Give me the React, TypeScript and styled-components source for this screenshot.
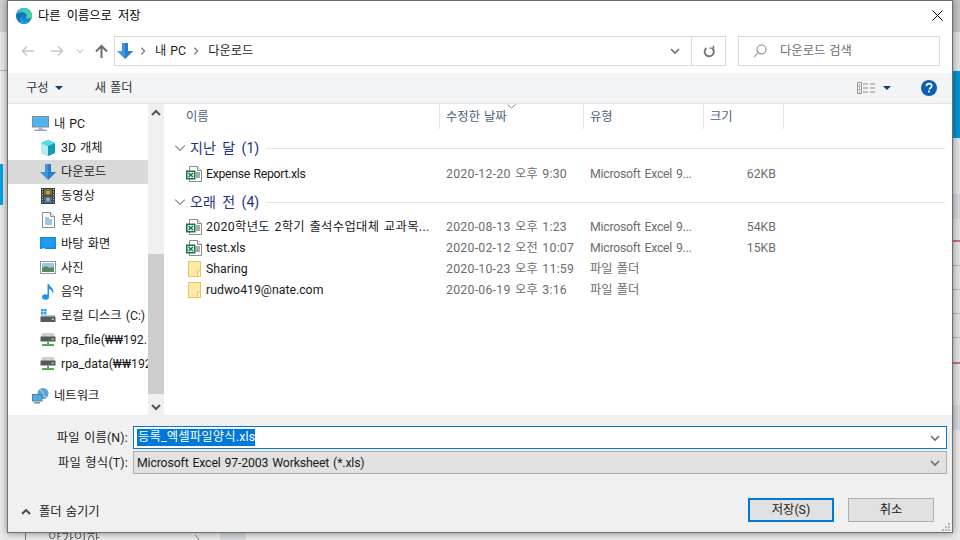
import React from "react";
import { createGlobalStyle, styled } from "styled-components";

const GlobalStyle = createGlobalStyle`
  * {
    box-sizing: border-box;
  }

  html, body {
    margin: 0;
    padding: 0;
    width: 960px;
    height: 540px;
    overflow: hidden;
  }

  body {
    font-family: Roboto, "Noto Sans CJK KR", sans-serif;
    font-size: 12.3px;
    line-height: 16px;
    word-spacing: 1px;
    color: #1a1a1a;
  }
`;

const Desktop = styled.div`
  position: relative;
  width: 960px;
  height: 540px;
  overflow: hidden;
  background: #e9e9e9;
`;

/* the blurred page behind the dialog */
const BackLeft = styled.div`
  position: absolute;
  left: 0;
  top: 0;
  width: 7px;
  height: 532px;
  display: flex;
  flex-direction: column;
`;

const BackRight = styled.div`
  position: absolute;
  right: 0;
  top: 0;
  width: 8px;
  height: 540px;
  display: flex;
  flex-direction: column;
`;

const Stripe = styled.div<{ $h: number; $c: string; $w?: number }>`
  height: ${(p) => p.$h}px;
  width: ${(p) => (p.$w ? `${p.$w}px` : "100%")};
  background: ${(p) => p.$c};
  flex: none;
`;

const BackBottom = styled.div`
  position: absolute;
  left: 25px;
  top: 531px;
  height: 9px;
  width: 222px;
  display: flex;
  align-items: flex-start;
  font-size: 14px;
  line-height: 14px;
  color: #6a6a6a;
  filter: blur(0.3px);
`;

const BackTick = styled.div`
  width: 1px;
  height: 9px;
  margin-right: 22px;
  background: #777;
`;

const BackLabel = styled.span`
  width: 146px;
  flex: none;
`;

const BackChevron = styled.svg`
  margin-top: 3px;
  margin-right: 20px;
  flex: none;
`;

const BackShade = styled.div`
  width: 26px;
  height: 9px;
  flex: none;
  background: #d3d6da;
`;

const Dialog = styled.div`
  position: absolute;
  left: 7px;
  top: 0;
  width: 946px;
  height: 533px;
  background: #ffffff;
  border: 1px solid #6e6e6e;
  box-shadow: 0 0 7px rgba(0, 0, 0, 0.45);
  display: flex;
  flex-direction: column;
`;

const TitleBar = styled.div`
  height: 29px;
  flex: none;
  display: flex;
  align-items: center;
  padding: 0 9px 0 8px;
  gap: 6px;
`;

const TitleText = styled.div`
  flex: 1;
  word-spacing: 3px;
  color: #000;
`;

const NavBar = styled.div`
  height: 43px;
  flex: none;
  display: flex;
  align-items: flex-start;
  padding: 6px 12px 0 13px;
`;

const NavButton = styled.div<{ $w: number; $ml: number }>`
  width: ${(p) => p.$w}px;
  margin-left: ${(p) => p.$ml}px;
  height: 30px;
  flex: none;
  display: flex;
  align-items: center;
  justify-content: center;
`;

const AddressBox = styled.div`
  width: 612px;
  height: 30px;
  flex: none;
  margin-left: 6px;
  border: 1px solid #d9d9d9;
  display: flex;
  align-items: center;
  padding-left: 2px;
`;

const CrumbSep = styled.span`
  display: flex;
  margin-left: 6px;
`;

const Crumb = styled.span`
  margin-left: 8px;
  color: #1a1a1a;
`;

const AddressFill = styled.div`
  flex: 1;
`;

const AddressDrop = styled.div`
  width: 33px;
  height: 100%;
  display: flex;
  align-items: center;
  justify-content: center;
`;

const RefreshBox = styled.div`
  width: 34px;
  height: 100%;
  flex: none;
  border-left: 1px solid #d9d9d9;
  display: flex;
  align-items: center;
  justify-content: center;
`;

const SearchBox = styled.div`
  width: 202px;
  height: 30px;
  margin-left: 12px;
  flex: none;
  border: 1px solid #d9d9d9;
  display: flex;
  align-items: center;
  padding-left: 14px;
  gap: 13px;
  color: #6d6d6d;
`;

const CommandBar = styled.div`
  height: 31px;
  flex: none;
  background: #f3f4f6;
  border-bottom: 1px solid #e6e6e6;
  display: flex;
  align-items: center;
  padding: 0 15px 0 18px;
  color: #353535;
`;

const CommandItem = styled.div`
  display: flex;
  align-items: center;
  gap: 6px;
  margin-right: 32px;
`;

const CommandFill = styled.div`
  flex: 1;
`;

const Caret = styled.div<{ $c: string }>`
  width: 0;
  height: 0;
  border-left: 4px solid transparent;
  border-right: 4px solid transparent;
  border-top: 4px solid ${(p) => p.$c};
`;

const ViewSwitch = styled.div`
  display: flex;
  align-items: center;
  gap: 8px;
  margin-right: 30px;
`;

const Body = styled.div`
  flex: 1;
  min-height: 0;
  display: flex;
`;

const NavPane = styled.div`
  width: 140px;
  flex: none;
  overflow: hidden;
  padding-top: 8px;
`;

const NavRow = styled.div<{ $child?: boolean; $selected?: boolean; $gap?: boolean }>`
  height: 24px;
  width: 140px;
  display: flex;
  align-items: center;
  gap: 5px;
  padding-left: ${(p) => (p.$child ? 32 : 24)}px;
  padding-bottom: 1px;
  margin-top: ${(p) => (p.$gap ? 8 : 0)}px;
  background: ${(p) => (p.$selected ? "#d9d9d9" : "transparent")};
  white-space: nowrap;
  color: #1a1a1a;
  overflow: hidden;

  & > svg {
    flex: none;
  }
`;

const ScrollBar = styled.div`
  width: 16px;
  flex: none;
  background: #f0f0f0;
  display: flex;
  flex-direction: column;
`;

const ScrollButton = styled.div`
  height: 17px;
  flex: none;
  display: flex;
  align-items: center;
  justify-content: center;
`;

const ScrollTrack = styled.div`
  flex: 1;
  padding-top: 133px;
  padding-bottom: 4px;
  display: flex;
`;

const ScrollThumb = styled.div`
  flex: 1;
  background: #cdcdcd;
`;

const FilePane = styled.div`
  flex: 1;
  min-width: 0;
  padding-left: 1px;
`;

const columns = "275px 144px 120px 80px 1fr";

const HeaderRow = styled.div`
  position: relative;
  display: grid;
  grid-template-columns: ${columns};
  height: 25px;
  color: #4c607a;
`;

const HeaderCell = styled.div<{ $first?: boolean; $last?: boolean }>`
  display: flex;
  align-items: center;
  padding-left: ${(p) => (p.$first ? 21 : 6)}px;
  border-right: ${(p) => (p.$last ? "none" : "1px solid #e5e5e5")};
`;

const SortMark = styled.svg`
  position: absolute;
  left: 342px;
  top: 0;
`;

const GroupHeader = styled.div<{ $before: number; $after: number }>`
  display: flex;
  align-items: center;
  height: 18px;
  margin-top: ${(p) => p.$before}px;
  margin-bottom: ${(p) => p.$after}px;
  padding: 0 7px 0 9px;
  color: #1e3287;
  font-size: 14px;
  word-spacing: 3px;
  gap: 4px;
  white-space: nowrap;
`;

const GroupLine = styled.div`
  flex: 1;
  height: 1px;
  margin-left: 3px;
  background: #e3e3e3;
`;

const FileRow = styled.div`
  display: grid;
  grid-template-columns: ${columns};
  height: 21px;
  align-items: center;
  color: #6d6d6d;
  white-space: nowrap;
`;

const NameCell = styled.div<{ $track: number }>`
  display: flex;
  align-items: center;
  gap: 4px;
  padding-left: 21px;
  color: #1a1a1a;
  letter-spacing: ${(p) => p.$track}px;
  overflow: hidden;

  & > svg {
    flex: none;
  }
`;

const DataCell = styled.div<{ $track?: number }>`
  padding-left: 6px;
  letter-spacing: ${(p) => p.$track ?? 0}px;
`;

const SizeCell = styled.div`
  padding-right: 8px;
  text-align: right;
`;

const Footer = styled.div`
  position: relative;
  height: 117px;
  flex: none;
  background: #f0f0f0;
  padding: 11px 5px 0 0;
  display: flex;
  flex-direction: column;
`;

const FieldRow = styled.div`
  display: flex;
  align-items: center;
  height: 23px;
  margin-bottom: 2px;
`;

const FieldLabel = styled.div`
  width: 121px;
  text-align: right;
  padding-right: 1px;
  color: #1a1a1a;
  flex: none;
  margin-right: 4px;
  white-space: nowrap;
  letter-spacing: 0.2px;
`;

const FieldBox = styled.div<{ $focus?: boolean }>`
  flex: 1;
  height: 23px;
  display: flex;
  align-items: center;
  justify-content: space-between;
  background: ${(p) => (p.$focus ? "#ffffff" : "#e1e1e1")};
  border: 1px solid ${(p) => (p.$focus ? "#0078d7" : "#adadad")};
  padding: 0 6px 0 3px;
`;

const SelectedText = styled.span`
  background: #0078d7;
  color: #ffffff;
  height: 17px;
  line-height: 17px;
  padding: 0 0 0 1px;
  letter-spacing: 0.2px;
`;

const PlainValue = styled.span`
  color: #1a1a1a;
  letter-spacing: -0.15px;
`;

const ActionRow = styled.div`
  display: flex;
  align-items: center;
  margin-top: 22px;
  padding-right: 13px;
`;

const HideFolders = styled.div`
  display: flex;
  align-items: center;
  gap: 8px;
  padding-left: 13px;
  flex: 1;
  color: #1a1a1a;
  padding-top: 3px;
`;

const DialogButton = styled.div<{ $primary?: boolean }>`
  width: 86px;
  height: 24px;
  margin-left: 14px;
  background: #e1e1e1;
  border: ${(p) => (p.$primary ? "2px solid #0078d7" : "1px solid #adadad")};
  display: flex;
  align-items: center;
  justify-content: center;
  color: #1a1a1a;
`;

const Grip = styled.svg`
  position: absolute;
  right: 1px;
  bottom: 0;
`;

const EdgeIcon = () => (
  <svg width="16" height="16" viewBox="0 0 16 16">
    <defs>
      <linearGradient id="edgeA" x1="0" y1="0" x2="1" y2="1">
        <stop offset="0" stopColor="#0c59a4" />
        <stop offset="1" stopColor="#1b9de2" />
      </linearGradient>
      <linearGradient id="edgeB" x1="0" y1="0" x2="1" y2="1">
        <stop offset="0" stopColor="#35c1f1" />
        <stop offset="1" stopColor="#4fdc7a" />
      </linearGradient>
    </defs>
    <circle cx="8" cy="8" r="8" fill="url(#edgeA)" />
    <path d="M1 6C2 2 5 0 8 0c4.500 0 8 3 8 7.500 0 2-1.500 3-3.500 3-1.500 0-2.500-.5-2.500-1 1-1 1-2.500 0-3.500C8.500 4 4 3.500 1 6z" fill="url(#edgeB)" />
    <path d="M6 9.500c0 3 2.500 5 6 4.500-1 1.200-2.500 2-4 2-3 0-4.500-3-3.500-5.500.3-.8 1-1.500 1.500-1z" fill="#1b9de2" />
  </svg>
);

const BackArrow = ({ c, flip }: { c: string; flip?: boolean }) => (
  <svg width="13" height="12" viewBox="0 0 13 12" fill="none" stroke={c} strokeWidth="1.600">
    {flip ? <path d="M0 6h11.500M7 1.500 11.500 6 7 10.500" /> : <path d="M13 6H1.500M6 1.500 1.500 6 6 10.500" />}
  </svg>
);

const SmallChevron = ({ c, dir, w = 10, sw = 1.6 }: { c: string; dir: "up" | "down" | "right"; w?: number; sw?: number }) => (
  <svg width={w} height={w} viewBox="0 0 10 10" fill="none" stroke={c} strokeWidth={sw}>
    {dir === "down" && <path d="M1 3l4 4 4-4" />}
    {dir === "up" && <path d="M1 7l4-4 4 4" />}
    {dir === "right" && <path d="M3 1l4 4-4 4" />}
  </svg>
);

const UpArrow = () => (
  <svg width="13" height="14" viewBox="0 0 13 14" fill="none" stroke="#6d6d6d" strokeWidth="2">
    <path d="M6.500 14V2M1 7.500l5.500-5.500 5.500 5.500" />
  </svg>
);

const DownloadArrow = ({ size = 16 }: { size?: number }) => (
  <svg width={size} height={size} viewBox="0 0 16 16">
    <path d="M5 0h6v8h5l-8 8-8-8h5z" fill="#3f93e0" />
    <path d="M8 0h3v8h5l-8 8z" fill="#2a7cc9" />
  </svg>
);

const RefreshIcon = () => (
  <svg width="12" height="13" viewBox="0 0 12 13" fill="none" stroke="#757575" strokeWidth="1.900">
    <path d="M9.500 3.500A4.600 4.600 0 1 1 3.500 3" />
    <path d="M6.500 3.200h4V.5" strokeWidth="1.300" />
  </svg>
);

const SearchIcon = () => (
  <svg width="14" height="14" viewBox="0 0 14 14" fill="none">
    <circle cx="8.500" cy="5.500" r="4.500" stroke="#8a8a8a" strokeWidth="1.100" />
    <path d="M5.200 8.800 1 13" stroke="#c9a884" strokeWidth="1.300" />
  </svg>
);

const ViewIcon = () => (
  <svg width="18" height="12" viewBox="0 0 18 12">
    <rect x="0.500" y="0.500" width="4" height="11" fill="#fff" stroke="#9a9a9a" />
    <path d="M0.500 4.200h4M0.500 7.800h4" stroke="#9a9a9a" />
    <rect x="2" y="2" width="1" height="1" fill="#666" />
    <rect x="2" y="5.500" width="1" height="1" fill="#666" />
    <rect x="2" y="9.500" width="1" height="1" fill="#c73a3a" />
    <path d="M6 2h5M13 2h5M6 6h5M13 6h5M6 10h5M13 10h5" stroke="#8d8d8d" />
  </svg>
);

const HelpIcon = () => (
  <svg width="16" height="16" viewBox="0 0 16 16">
    <circle cx="8" cy="8" r="8" fill="#0a5fb4" />
    <path d="M5.400 6.200C5.500 4.600 6.600 3.700 8.100 3.700c1.500 0 2.600.9 2.600 2.200 0 1.100-.6 1.600-1.300 2.100-.7.5-.9.8-.9 1.500" fill="none" stroke="#fff" strokeWidth="1.700" />
    <rect x="7.100" y="10.600" width="1.800" height="1.800" fill="#fff" />
  </svg>
);

const CloseIcon = () => (
  <svg width="11" height="11" viewBox="0 0 11 11" stroke="#000" strokeWidth="1" fill="none">
    <path d="M.5.500l10 10M10.500.500l-10 10" />
  </svg>
);

const MonitorIcon = () => (
  <svg width="17" height="16" viewBox="0 0 17 16">
    <rect x="0.500" y="0.500" width="16" height="10.500" fill="#5cc1f5" stroke="#7d8b96" />
    <rect x="1.500" y="1.500" width="14" height="8.500" fill="#4eb3ef" />
    <rect x="6.500" y="11" width="4" height="2.500" fill="#a9b4bc" />
    <rect x="2.500" y="13.500" width="12" height="1.500" fill="#8fa0ac" />
  </svg>
);

const CubeIcon = () => (
  <svg width="16" height="16" viewBox="0 0 16 16">
    <path d="M8 0l7 3v10l-7 3-7-3V3z" fill="#30c5d8" />
    <path d="M1 3l7 3v10l-7-3z" fill="#b5eef2" />
    <path d="M8 6l7-3v10l-7 3z" fill="#159bb0" />
    <path d="M8 0l7 3-7 3-7-3z" fill="#4edbe8" />
  </svg>
);

const FilmIcon = () => (
  <svg width="16" height="16" viewBox="0 0 16 16">
    <rect x="1" width="14" height="16" fill="#3c3c3c" />
    <rect x="4" y="1" width="8" height="6.500" fill="#6c6a3a" />
    <rect x="4" y="8.500" width="8" height="6.500" fill="#3c6fb8" />
    <circle cx="8" cy="4.500" r="2" fill="#d8a52f" />
    <circle cx="8" cy="11.500" r="2" fill="#c9b13c" />
    <path d="M2.500 1v14M13.500 1v14" stroke="#d9d9d9" strokeDasharray="1 1.500" />
  </svg>
);

const DocIcon = () => (
  <svg width="16" height="16" viewBox="0 0 16 16">
    <path d="M2.500.500h8l4 4v11h-12z" fill="#fff" stroke="#8b8b8b" />
    <path d="M10.500.500v4h4" fill="#e8e8e8" stroke="#8b8b8b" />
    <path d="M5 6h4M5 8h7M5 10h7M5 12h7" stroke="#3d8bc9" />
  </svg>
);

const DesktopIcon = () => (
  <svg width="16" height="13" viewBox="0 0 16 13">
    <rect width="16" height="12" rx="0.500" fill="#1186e0" />
    <rect x="1" y="1" width="14" height="9.500" fill="#1e9bef" />
    <rect x="2" y="11" width="3" height="1" fill="#9ed4f7" />
  </svg>
);

const PictureIcon = () => (
  <svg width="16" height="13" viewBox="0 0 16 13">
    <rect x="0.500" y="0.500" width="15" height="12" fill="#fff" stroke="#8e9aa5" />
    <rect x="2" y="2" width="12" height="5" fill="#9cc8e8" />
    <path d="M2 7l4-2 4 2 4-1v5H2z" fill="#5b8763" />
  </svg>
);

const MusicIcon = () => (
  <svg width="16" height="16" viewBox="0 0 16 16">
    <ellipse cx="5.500" cy="13" rx="3.500" ry="2.800" fill="#1e96e8" />
    <path d="M7.500 13V0h1.500c.3 2.500 4.500 3.500 4.500 7.500 0 1-.3 1.700-.8 2.300.2-3-2.500-4.500-3.700-5V13z" fill="#1e96e8" />
  </svg>
);

const DiskIcon = ({ net }: { net?: boolean }) => (
  <svg width="16" height="14" viewBox="0 0 16 14">
    {!net && <path d="M1 0h2.500v2.500H1zM4 0h2.500v2.500H4zM1 3h2.500v2.500H1zM4 3h2.500v2.500H4z" fill="#23a5e6" />}
    {net && <rect x="1.500" y="0" width="13" height="4" rx="1" fill="#d0d0d0" />}
    <path d="M1 6h14v2H1z" fill="#c4c8cc" />
    <rect x="0.500" y={net ? 3.500 : 7.500} width="15" height={net ? 5 : 5.500} fill="#55595c" />
    <rect x="11.500" y={net ? 5.500 : 9.500} width="2.500" height="1.500" fill="#7ce07c" />
    {net && <path d="M8 8.500V11M2 12h12" stroke="#53b343" strokeWidth="2" />}
  </svg>
);

const NetworkIcon = () => (
  <svg width="17" height="16" viewBox="0 0 17 16">
    <circle cx="11" cy="5.500" r="5.500" fill="#5fa3cf" />
    <path d="M8 2c2 1 3 2 3 4s2 3 4 3" stroke="#b8dcef" fill="none" />
    <rect x="0.500" y="6.500" width="9.500" height="6.500" fill="#47b0e8" stroke="#5a7f96" />
    <rect x="2" y="14" width="6" height="1.500" fill="#7b8f9c" />
  </svg>
);

const ExcelIcon = () => (
  <svg width="16" height="16" viewBox="0 0 16 16">
    <path d="M3.500.500h8l4 4v11h-12z" fill="#fff" stroke="#8b8b8b" />
    <path d="M11.500.500v4h4" fill="#eee" stroke="#8b8b8b" />
    <path d="M10 7h4M10 9h4M10 11h4" stroke="#555" />
    <rect x="0" y="4.500" width="9.500" height="9" fill="#17744a" />
    <rect x="1.500" y="6" width="6.500" height="6" fill="#e8f3ec" />
    <path d="M2.500 7 7 11M7 7 2.500 11" stroke="#17744a" strokeWidth="1.400" />
  </svg>
);

const FolderIcon = () => (
  <svg width="16" height="16" viewBox="0 0 16 16">
    <rect x="2.500" y="0.500" width="12" height="15" fill="#fde9a8" stroke="#e8c65a" />
    <rect x="11.500" y="10" width="3" height="5.500" fill="#fff3c8" stroke="#e8c65a" />
  </svg>
);

const excelType = "Microsoft Excel 9...";

const files = [
  {
    group: "지난 달 (1)",
    before: 10,
    after: 6,
    rows: [{ name: "Expense Report.xls", track: -0.33, date: "2020-12-20 오후 9:30", type: excelType, size: "62KB" }],
  },
  {
    group: "오래 전 (4)",
    before: 9,
    after: 5,
    rows: [
      { name: "2020학년도 2학기 출석수업대체 교과목...", track: 0.35, date: "2020-08-13 오후 1:23", type: excelType, size: "54KB" },
      { name: "test.xls", track: 0, date: "2020-02-12 오전 10:07", type: excelType, size: "15KB" },
      { name: "Sharing", track: 0, date: "2020-10-23 오후 11:59", type: "파일 폴더", size: "" },
      { name: "rudwo419@nate.com", track: 0, date: "2020-06-19 오후 3:16", type: "파일 폴더", size: "" },
    ],
  },
];

const App = () => {
  return (
    <Desktop>
      <GlobalStyle />
      <BackLeft>
        <Stripe $h={32} $c="#cfcfcf" />
        <Stripe $h={38} $c="#ebebeb" />
        <Stripe $h={1} $c="#b5b5b5" />
        <Stripe $h={93} $c="#ececec" />
        <Stripe $h={41} $c="#00a2e8" $w={3} />
      </BackLeft>
      <BackRight>
        <Stripe $h={32} $c="#c4c4c4" />
        <Stripe $h={39} $c="#e4e4e4" />
        <Stripe $h={67} $c="#0094d4" />
        <Stripe $h={56} $c="#e3e3e3" />
        <Stripe $h={25} $c="#d3d7dc" />
        <Stripe $h={21} $c="#e3e3e3" />
        <Stripe $h={2} $c="#cf6a74" />
        <Stripe $h={23} $c="#e3e3e3" />
        <Stripe $h={1} $c="#b5b5b5" />
        <Stripe $h={23} $c="#e3e3e3" />
        <Stripe $h={1} $c="#b5b5b5" />
        <Stripe $h={23} $c="#e3e3e3" />
        <Stripe $h={1} $c="#b5b5b5" />
        <Stripe $h={23} $c="#e3e3e3" />
        <Stripe $h={1} $c="#b5b5b5" />
        <Stripe $h={24} $c="#e3e3e3" />
        <Stripe $h={2} $c="#cf6a74" />
        <Stripe $h={41} $c="#e3e3e3" />
        <Stripe $h={25} $c="#d3d7dc" />
      </BackRight>
      <BackBottom>
        <BackTick />
        <BackLabel>약가인하</BackLabel>
        <BackChevron width="6" height="9" viewBox="0 0 6 9" fill="none" stroke="#8a8a8a">
          <path d="M1 1l4 4-4 4" />
        </BackChevron>
        <BackShade />
      </BackBottom>

      <Dialog>
        <TitleBar>
          <EdgeIcon />
          <TitleText>다른 이름으로 저장</TitleText>
          <CloseIcon />
        </TitleBar>

        <NavBar>
          <NavButton $w={13} $ml={0}>
            <BackArrow c="#c9c9c9" />
          </NavButton>
          <NavButton $w={13} $ml={17}>
            <BackArrow c="#c9c9c9" flip />
          </NavButton>
          <NavButton $w={8} $ml={12}>
            <SmallChevron c="#cfcfcf" dir="down" w={8} />
          </NavButton>
          <NavButton $w={13} $ml={11}>
            <UpArrow />
          </NavButton>
          <AddressBox>
            <DownloadArrow />
            <CrumbSep>
              <SmallChevron c="#7a7a7a" dir="right" w={8} />
            </CrumbSep>
            <Crumb>내 PC</Crumb>
            <CrumbSep>
              <SmallChevron c="#7a7a7a" dir="right" w={8} />
            </CrumbSep>
            <Crumb>다운로드</Crumb>
            <AddressFill />
            <AddressDrop>
              <SmallChevron c="#6d6d6d" dir="down" />
            </AddressDrop>
            <RefreshBox>
              <RefreshIcon />
            </RefreshBox>
          </AddressBox>
          <SearchBox>
            <SearchIcon />
            다운로드 검색
          </SearchBox>
        </NavBar>

        <CommandBar>
          <CommandItem>
            구성
            <Caret $c="#1f3a5f" />
          </CommandItem>
          <CommandItem>새 폴더</CommandItem>
          <CommandFill />
          <ViewSwitch>
            <ViewIcon />
            <Caret $c="#1f3a5f" />
          </ViewSwitch>
          <HelpIcon />
        </CommandBar>

        <Body>
          <NavPane>
            <NavRow>
              <MonitorIcon />내 PC
            </NavRow>
            <NavRow $child>
              <CubeIcon />
              3D 개체
            </NavRow>
            <NavRow $child $selected>
              <DownloadArrow />
              다운로드
            </NavRow>
            <NavRow $child>
              <FilmIcon />
              동영상
            </NavRow>
            <NavRow $child>
              <DocIcon />
              문서
            </NavRow>
            <NavRow $child>
              <DesktopIcon />
              바탕 화면
            </NavRow>
            <NavRow $child>
              <PictureIcon />
              사진
            </NavRow>
            <NavRow $child>
              <MusicIcon />
              음악
            </NavRow>
            <NavRow $child>
              <DiskIcon />
              로컬 디스크 (C:)
            </NavRow>
            <NavRow $child>
              <DiskIcon net />
              rpa_file(₩₩192.168
            </NavRow>
            <NavRow $child>
              <DiskIcon net />
              rpa_data(₩₩192.168
            </NavRow>
            <NavRow $gap>
              <NetworkIcon />
              네트워크
            </NavRow>
          </NavPane>
          <ScrollBar>
            <ScrollButton>
              <SmallChevron c="#555" dir="up" sw={2} />
            </ScrollButton>
            <ScrollTrack>
              <ScrollThumb />
            </ScrollTrack>
            <ScrollButton>
              <SmallChevron c="#555" dir="down" sw={2} />
            </ScrollButton>
          </ScrollBar>
          <FilePane>
            <HeaderRow>
              <HeaderCell $first>이름</HeaderCell>
              <HeaderCell>수정한 날짜</HeaderCell>
              <HeaderCell>유형</HeaderCell>
              <HeaderCell>크기</HeaderCell>
              <HeaderCell $last />
              <SortMark width="9" height="5" viewBox="0 0 9 5" fill="none" stroke="#8d8d8d">
                <path d="M.5.500l4 3.500 4-3.500" />
              </SortMark>
            </HeaderRow>
            {files.map((g) => (
              <div key={g.group}>
                <GroupHeader $before={g.before} $after={g.after}>
                  <SmallChevron c="#7f8b99" dir="down" w={12} sw={1} />
                  {g.group}
                  <GroupLine />
                </GroupHeader>
                {g.rows.map((f) => (
                  <FileRow key={f.name}>
                    <NameCell $track={f.track}>
                      {f.size ? <ExcelIcon /> : <FolderIcon />}
                      {f.name}
                    </NameCell>
                    <DataCell $track={0.25}>{f.date}</DataCell>
                    <DataCell $track={f.type === excelType ? -0.25 : 0}>{f.type}</DataCell>
                    <SizeCell>{f.size}</SizeCell>
                  </FileRow>
                ))}
              </div>
            ))}
          </FilePane>
        </Body>

        <Footer>
          <FieldRow>
            <FieldLabel>파일 이름(N):</FieldLabel>
            <FieldBox $focus>
              <SelectedText>등록_엑셀파일양식.xls</SelectedText>
              <SmallChevron c="#6d6d6d" dir="down" />
            </FieldBox>
          </FieldRow>
          <FieldRow>
            <FieldLabel>파일 형식(T):</FieldLabel>
            <FieldBox>
              <PlainValue>Microsoft Excel 97-2003 Worksheet (*.xls)</PlainValue>
              <SmallChevron c="#6d6d6d" dir="down" />
            </FieldBox>
          </FieldRow>
          <ActionRow>
            <HideFolders>
              <SmallChevron c="#444" dir="up" sw={1.8} />
              폴더 숨기기
            </HideFolders>
            <DialogButton $primary>저장(S)</DialogButton>
            <DialogButton>취소</DialogButton>
          </ActionRow>
          <Grip width="10" height="10" viewBox="0 0 10 10" fill="#b8b8b8">
            <rect x="7" y="1" width="2" height="2" />
            <rect x="4" y="4" width="2" height="2" />
            <rect x="7" y="4" width="2" height="2" />
            <rect x="1" y="7" width="2" height="2" />
            <rect x="4" y="7" width="2" height="2" />
            <rect x="7" y="7" width="2" height="2" />
          </Grip>
        </Footer>
      </Dialog>
    </Desktop>
  );
};

export default App;
